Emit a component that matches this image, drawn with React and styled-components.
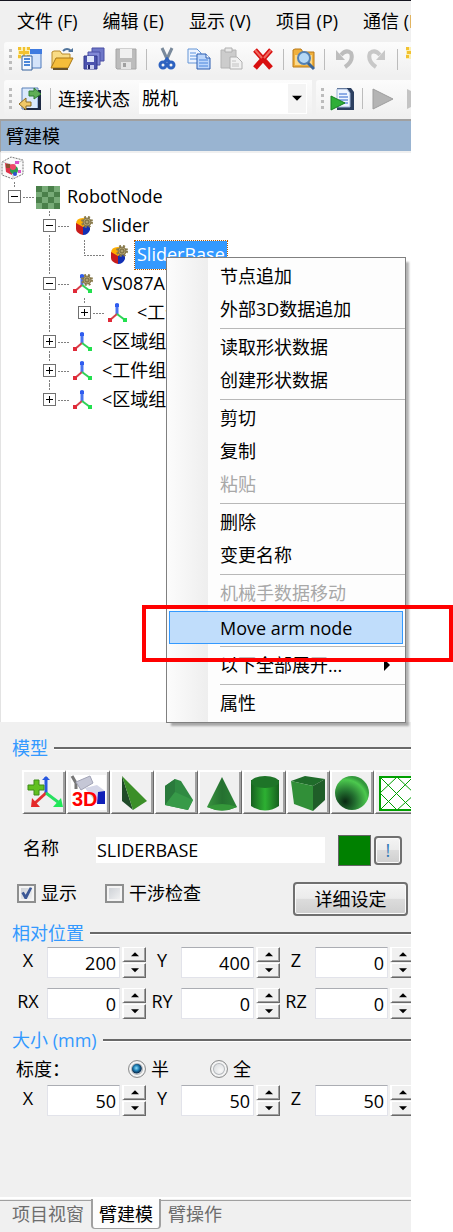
/**
 * Arm modelling pane: menu bar, tool strips, node tree with its context menu,
 * and the property form for the selected node.
 */

import { useState } from "react";
import styled, { createGlobalStyle, css } from "styled-components";

const GlobalStyle = createGlobalStyle`
  *, *::before, *::after {
    box-sizing: border-box;
  }

  body {
    margin: 0;
    background: #fff;
    color: #000;
    font: 18px/24px "Open Sans", "Noto Sans CJK SC", sans-serif;
  }

  button, input, select {
    margin: 0;
    padding: 0;
    border: 0;
    border-radius: 0;
    background: none;
    color: inherit;
    font: inherit;
  }
`;

const Page = styled.div`
  position: relative;
  min-height: 100vh;
  padding-right: 42px;
  display: flex;
`;

const AppWindow = styled.main`
  flex: 1;
  min-width: 0;
  display: flex;
  flex-direction: column;
  overflow: hidden;
  border-top: 1px solid #15151f;
  background: #f0f0f0;
`;

/* ---------- menu bar and tool strips ---------- */

const MenuBar = styled.nav`
  display: flex;
  gap: 25px;
  height: 41px;
  padding: 8px 0 0 17px;
`;

const MenuBarButton = styled.button`
  height: 24px;
  white-space: nowrap;
`;

const StripRow = styled.div`
  display: flex;
  gap: 4px;
  padding-left: 4px;
  height: ${(p) => p.$height}px;
`;

const Strip = styled.div`
  flex: ${(p) => (p.$width ? `0 0 ${p.$width}px` : "1 1 0")};
  min-width: 0;
  height: ${(p) => p.$height}px;
  display: flex;
  align-items: center;
  overflow: hidden;
  padding-left: 5px;
  border-radius: 3px 0 0 3px;
  background: linear-gradient(#fcfcfc, #f0f0f0);
`;

const Grip = styled.span`
  flex: none;
  width: 3px;
  height: 21px;
  margin-right: 2px;
  background: repeating-linear-gradient(#bcbcbc 0 3px, transparent 3px 6px);
`;

const ToolButton = styled.button`
  flex: 0 0 32px;
  height: 32px;
  display: flex;
  align-items: center;
  justify-content: center;
`;

const StripDivider = styled.span`
  flex: none;
  width: 1px;
  height: 21px;
  margin: 0 4px;
  background: #bcbcbc;
`;

const StatusLabel = styled.label`
  flex: none;
  margin: 0 9px 0 3px;
`;

const ComboBox = styled.div`
  position: relative;
  flex: 1;
  min-width: 0;
  height: 31px;
  margin-right: 5px;
  background: #fff;

  select {
    width: 100%;
    height: 31px;
    padding: 0 24px 2px 3px;
    appearance: none;
  }
`;

const ComboArrow = styled.span`
  position: absolute;
  top: 1px;
  right: 1px;
  width: 18px;
  height: 29px;
  display: flex;
  align-items: center;
  justify-content: center;
  background: #f4f4f4;
  pointer-events: none;
`;

const PaneTitle = styled.h1`
  margin: 0;
  height: 34px;
  padding: 3px 0 0 5px;
  border-top: 2px solid #a0a0a0;
  border-left: 1px solid #a0a0a0;
  border-bottom: 2px solid #f0f0f0;
  background: #99b4d1;
  font-size: 18px;
  line-height: 24px;
  font-weight: 400;
`;

/* ---------- tree ---------- */

const Tree = styled.ul`
  list-style: none;
  margin: 0;
  padding: 0;
  min-height: 569px;
  border-left: 1px solid #e3e3e3;
  background: #fff;
`;

const TreeRow = styled.li`
  display: flex;
  align-items: center;
  height: 29px;
  padding-left: ${(p) => (p.$level ? 7 : 0)}px;
`;

const verticalDots = css`
  content: "";
  position: absolute;
  left: 6px;
  top: 0;
  width: 1px;
  background: repeating-linear-gradient(#808080 0 2px, transparent 2px 3px);
`;

const Guide = styled.span`
  position: relative;
  flex: 0 0 35px;
  height: 29px;

  &::before {
    ${verticalDots}
    height: ${(p) => (p.$line ? 29 : 0)}px;
  }
`;

const Branch = styled.span`
  position: relative;
  flex: 0 0 28px;
  height: 29px;
  display: flex;
  align-items: center;

  &::before {
    ${verticalDots}
    height: ${(p) => (p.$last ? 15 : 29)}px;
  }

  &::after {
    content: "";
    position: absolute;
    left: 6px;
    right: 1px;
    top: 15px;
    height: 1px;
    background: repeating-linear-gradient(90deg, #808080 0 2px, transparent 2px 3px);
  }
`;

const Expander = styled.button`
  position: relative;
  z-index: 1;
  width: 13px;
  height: 13px;
  border: 1px solid #707070;
  outline: 2px solid #fff;
  background: #fff;

  &::before,
  &::after {
    content: "";
    position: absolute;
    background: #000;
  }

  &::before {
    left: 2px;
    top: 5px;
    width: 7px;
    height: 1px;
  }

  &::after {
    left: 5px;
    top: 2px;
    width: 1px;
    height: ${(p) => (p.$open ? 0 : 7)}px;
  }
`;

const NodeIcon = styled.span`
  flex: 0 0 24px;
  height: 24px;
`;

const NodeLabel = styled.span`
  margin-left: 5px;
  padding: 0 2px 2px;
  line-height: 26px;
  white-space: nowrap;

  ${(p) =>
    p.$selected &&
    css`
      outline: 1px dotted #b35a00;
      background: #3399ff;
      color: #fff;
    `}
`;

/* ---------- context menu ---------- */

const ContextMenu = styled.div`
  position: absolute;
  left: 166px;
  top: 257px;
  width: 240px;
  padding: 2px 0;
  border: 1px solid #808080;
  background: linear-gradient(90deg, #fcfcfc, #eeeeee 41px, #fdfdfd 41px);
  box-shadow: 4px 4px 2px -1px rgba(0, 0, 0, 0.3);
`;

const MenuItem = styled.button`
  display: flex;
  align-items: center;
  justify-content: space-between;
  width: 100%;
  height: 33px;
  padding: 0 11px 2px 53px;
  text-align: left;
  white-space: nowrap;

  &:disabled {
    color: #a8a8a8;
  }

  ${(p) =>
    p.$active &&
    css`
      width: calc(100% - 4px);
      margin: 1px 2px;
      padding: 0 11px 0 50px;
      border: 1px solid #3399ff;
      background: #c0ddfb;
    `}
`;

const MenuDivider = styled.hr`
  height: 1px;
  margin: 2px 0 2px 53px;
  border: 0;
  background: #b8b8b8;
`;

const Callout = styled.div`
  position: absolute;
  left: 142px;
  right: 0;
  top: 605px;
  height: 57px;
  border: 4px solid #ff0000;
  pointer-events: none;
`;

/* ---------- property form ---------- */

const Form = styled.form`
  flex: 1;
  padding-top: 14px;
`;

const SectionTitle = styled.h2`
  display: flex;
  align-items: center;
  gap: 6px;
  margin: 0;
  padding-left: 12px;
  color: #3399ff;
  font-size: 18px;
  line-height: 24px;
  font-weight: 400;

  &::after {
    content: "";
    flex: 1;
    height: 3px;
    border-top: 2px solid #696969;
    border-bottom: 1px solid #fff;
  }
`;

const ShapeBar = styled.div`
  display: flex;
  margin: 10px 0 0 22px;
  overflow: hidden;
`;

const ShapeButton = styled.button`
  flex: 0 0 44px;
  height: 44px;
  display: flex;
  align-items: center;
  justify-content: center;
  border: solid;
  border-width: 2px 1px 1px 2px;
  border-color: #fff #696969 #696969 #fff;
  box-shadow: inset -2px -1px #a0a0a0;
`;

const NameRow = styled.div`
  display: flex;
  align-items: center;
  margin-top: 20px;
  padding: 0 9px 0 23px;
  height: 32px;

  label {
    flex: 0 0 73px;
    line-height: 24px;
    padding-bottom: 4px;
  }
`;

const NameInput = styled.input`
  flex: 1;
  min-width: 0;
  height: 26px;
  padding: 0 1px;
  background: #fff;
`;

const Swatch = styled.button`
  width: 33px;
  height: 31px;
  margin-left: 13px;
  border: 1px solid #646464;
  background: #008000;
`;

const PushButton = styled.button`
  flex: none;
  width: ${(p) => p.$width}px;
  height: ${(p) => p.$height}px;
  border: 2px solid #707070;
  border-radius: 4px;
  background: linear-gradient(#f4f4f4, #ebebeb 48%, #dcdcdc 50%, #cfcfcf);
  box-shadow: inset 0 0 0 1px #fafafa;
`;

const AlertButton = styled(PushButton)`
  margin-left: 3px;
  color: #3378b8;
  line-height: 20px;
`;

const OptionsRow = styled.div`
  display: flex;
  align-items: flex-start;
  height: 34px;
  margin-top: 16px;
  padding: 0 3px 0 17px;
`;

const Option = styled.label`
  display: flex;
  align-items: center;
  gap: 5px;
  height: 22px;
  margin-right: 28px;
  white-space: nowrap;
`;

const Spacer = styled.span`
  flex: 1;
`;

const CheckBox = styled.input.attrs({ type: "checkbox" })`
  appearance: none;
  width: 19px;
  height: 19px;
  border: 2px solid #8e8f8f;
  box-shadow: inset 0 0 0 2px #f4f4f4;
  background: linear-gradient(135deg, #c8ccd2, #f6f6f6);

  &:checked::before {
    content: "";
    display: block;
    width: 15px;
    height: 15px;
    background: #3c5896;
    clip-path: polygon(16% 50%, 32% 42%, 44% 62%, 72% 12%, 88% 16%, 52% 90%, 38% 90%);
  }
`;

const Radio = styled.input.attrs({ type: "radio" })`
  appearance: none;
  width: 18px;
  height: 18px;
  border: 1px solid #8e8f8f;
  border-radius: 50%;
  box-shadow: inset 0 0 0 2px #f4f4f4, inset 0 0 0 3px #b4b8bc;
  background: radial-gradient(circle at 60% 60%, #f8f8f8, #c8ccd0);

  &:checked {
    background: radial-gradient(circle at 46% 44%, #8fe0ff, #1f7fb4 22%, #0b2f52 40%, #d8dde2 48%);
  }
`;

const AxisRow = styled.div`
  display: flex;
  height: 32px;
  margin-top: ${(p) => p.$gap}px;
  padding-left: 12px;
  overflow: hidden;
`;

const AxisField = styled.div`
  flex: 0 0 134px;
  display: flex;

  label {
    flex: 0 0 32px;
    margin-right: 3px;
    padding-top: 1px;
    text-align: center;
  }
`;

const AxisInput = styled.input`
  flex: 0 0 73px;
  width: 73px;
  height: 31px;
  padding: 0 3px 0 0;
  border: 1px solid #e2e3ea;
  border-top-color: #abadb3;
  background: #fff;
  text-align: right;
`;

const Spinner = styled.span`
  flex: 0 0 24px;
  margin-left: 2px;
`;

const SpinButton = styled.button`
  display: flex;
  align-items: center;
  justify-content: center;
  width: 24px;
  height: 15px;
  margin-bottom: 1px;
  border: solid;
  border-width: 1px 1px 1px 2px;
  border-color: #fff #696969 #696969 #fff;
  box-shadow: inset -1px -1px #a0a0a0;
`;

const PositionBlock = styled.section`
  margin: 5px 0 8px;
`;

const ScaleRow = styled.fieldset`
  display: flex;
  align-items: center;
  height: 24px;
  min-width: 0;
  margin: 5px 0 0;
  padding: 0 0 0 16px;
  border: 0;

  > span {
    flex: 0 0 112px;
  }

  ${Option} {
    flex: 0 0 82px;
    margin: 0;
  }
`;

/* ---------- bottom tabs ---------- */

const TabBar = styled.div`
  display: flex;
  height: 35px;
  padding-left: 3px;
  border-top: 2px solid #fff;
  background: linear-gradient(#a0a0a0, #a0a0a0) 0 1px / 100% 1px no-repeat #f0f0f0;
`;

const Tab = styled.button`
  height: 30px;
  padding: 0 7px;
  border: solid transparent;
  border-width: 0 2px 1px;
  color: #6d6d6d;

  ${(p) =>
    p.$active &&
    css`
      padding: 0 6px;
      margin: 0 -2px;
      border-color: #a0a0a0;
      border-radius: 0 0 4px 4px;
      background: #fdfdfd;
      color: #000;
    `}
`;

/* ---------- drawings ---------- */

const Star = () => (
  <path
    d="M0 0h3v3H0zM5 0h2v4h4v3H7v4H5V7H1V4h4zM9 0h3v3H9zM0 8h3v3H0zM9 8h3v3H9z"
    fill="#f2c230"
  />
);

const TOOL_ICONS = {
  new: (
    <>
      <path d="M6 3h17v18H6z" fill="#d4e3fa" stroke="#4d78bc" />
      <path d="M6 2h18v5H6z" fill="#3f7be0" />
      <path d="M0 0h12v12H0z" fill="#fbefb4" />
      <Star />
      <path d="M4 9h10v14H4z" fill="#f3f7fd" stroke="#34619c" />
      <path d="M6 12h6M6 15h6M6 18h6" stroke="#4a86d8" strokeWidth="2" />
    </>
  ),
  open: (
    <>
      <path d="M2 21V5l2-1h6l2 3h8v4" fill="#f9dc85" stroke="#b98a2c" />
      <path d="M1 21l5-10h17l-5 10z" fill="#f5bd3a" stroke="#a97816" />
      <path d="M3 22h15" stroke="#66512a" strokeWidth="2" />
      <path d="M13 4q4-4 8 0" fill="none" stroke="#51749c" strokeWidth="2" />
      <path d="M18 5h5V1z" fill="#51749c" />
    </>
  ),
  saveAll: (
    <>
      <path d="M10 1h12v13H10z" fill="#6f78c8" stroke="#4a4fa4" />
      <path d="M6 5h12v13H6z" fill="#8189d6" stroke="#4a4fa4" />
      <path d="M2 9h13v13H2z" fill="#4b52ae" stroke="#33388c" />
      <path d="M5 9h7v6H5z" fill="#dfe6fa" />
      <path d="M5 18h7v4H5z" fill="#c9cdef" />
      <path d="M6 18h2v4H6z" fill="#25286e" />
    </>
  ),
  save: (
    <>
      <path d="M2 2h20v20H3l-1-1z" fill="#bcbcbc" stroke="#a6a6a6" />
      <path d="M6 2h12v9H6z" fill="#f0f0f0" />
      <path d="M7 15h10v7H7z" fill="#e4e4e4" />
      <path d="M9 16h3v4H9z" fill="#a0a0a0" />
    </>
  ),
  cut: (
    <>
      <path d="M7 1l6 13M17 1l-6 13" stroke="#7a8a9c" strokeWidth="3" />
      <circle cx="8" cy="18" r="3" fill="none" stroke="#2d62c0" strokeWidth="3" />
      <circle cx="16" cy="18" r="3" fill="none" stroke="#2d62c0" strokeWidth="3" />
      <path d="M9 16l3-4 3 4" fill="none" stroke="#2d62c0" strokeWidth="3" />
    </>
  ),
  copy: (
    <>
      <path d="M1 2h9l4 4v10H1z" fill="#edf4ff" stroke="#6495d6" />
      <path d="M3 6h6M3 9h8M3 12h8" stroke="#5b93e0" />
      <path d="M10 7h9l4 4v11H10z" fill="#bcd6fb" stroke="#2a5cb0" />
      <path d="M19 7v4h4" fill="#fff" stroke="#2a5cb0" />
      <path d="M12 13h9M12 16h9M12 19h9" stroke="#4a86dc" />
    </>
  ),
  paste: (
    <>
      <path d="M2 3h15v18H2z" fill="#cccccc" stroke="#b4b4b4" />
      <path d="M6 1h7v4H6z" fill="#e9e9e9" stroke="#b0b0b0" />
      <path d="M11 10h7l5 5v7H11z" fill="#f1f1f1" stroke="#b0b0b0" />
      <path d="M13 14h4M13 17h7M13 19h7" stroke="#c2c2c2" />
    </>
  ),
  remove: (
    <>
      <path d="M4 3l16 18M20 3L4 21" stroke="#d80f0f" strokeWidth="5" />
      <path d="M4 3l7 8M20 3l-7 8" stroke="#f06a60" strokeWidth="2" />
    </>
  ),
  find: (
    <>
      <path d="M1 20V3l2-1h6l2 3h11v15z" fill="#f0b03c" stroke="#b87818" />
      <path d="M3 8h17v10H3z" fill="#f9d98e" />
      <circle cx="12" cy="11" r="6" fill="#b5d8f6" stroke="#5481b4" strokeWidth="2" />
      <path d="M16 16l6 6" stroke="#3d6698" strokeWidth="3" />
    </>
  ),
  undo: (
    <>
      <path d="M8 8q5-6 10-2 3 8-6 14" fill="none" stroke="#bdbdbd" strokeWidth="4" />
      <path d="M3 3v10h9z" fill="#bdbdbd" />
    </>
  ),
  redo: (
    <>
      <path d="M15 8q-5-6-10-2-3 8 6 14" fill="none" stroke="#c8c8c8" strokeWidth="4" />
      <path d="M20 3v10h-9z" fill="#c8c8c8" />
    </>
  ),
  connect: (
    <>
      <path d="M4 1h16v21H4z" fill="#dbe9fc" stroke="#5b80b8" />
      <path d="M20 3h3v20H6v-2h14z" fill="#1f2a44" />
      <path d="M11 4h5V1l7 6-7 5V9h-5z" fill="#5fae56" stroke="#2f7d33" />
      <path d="M13 15H8v-4l-7 6 7 6v-4h5z" fill="#f0c866" stroke="#8b6a22" />
    </>
  ),
  run: (
    <>
      <path d="M7 1h14l3 4v18H7z" fill="#2c3f60" />
      <path d="M7 2h10l3 4v14H7z" fill="#eff5ff" stroke="#9db4d8" />
      <path d="M9 7h8M9 10h9M9 13h9M9 16h9" stroke="#2b62cc" />
      <path d="M1 9l14 7-14 7z" fill="#2fae38" stroke="#178024" />
    </>
  ),
  play: <path d="M2 2l20 10L2 22z" fill="#b4b4b4" stroke="#9e9e9e" />,
  step: <path d="M4 2l20 10L4 22z" fill="#c4c4c4" />,
  newItem: (
    <>
      <path d="M0 0h12v12H0z" fill="#fbefb4" />
      <Star />
      <path d="M7 12v10" stroke="#3f5c84" strokeWidth="3" />
    </>
  ),
};

function ToolIcon({ name }) {
  return (
    <svg width="24" height="24" viewBox="0 0 24 24" aria-hidden="true">
      {TOOL_ICONS[name]}
    </svg>
  );
}

const Gear = () => (
  <>
    <circle cx="16" cy="8" r="5" fill="none" stroke="#8b7d4e" strokeWidth="2" strokeDasharray="2 2" />
    <circle cx="16" cy="8" r="4" fill="#b0a274" stroke="#82744a" />
    <circle cx="16" cy="8" r="2" fill="none" stroke="#75683c" />
  </>
);

const Axes = () => (
  <>
    <path d="M11 2v12" stroke="#4a74ee" strokeWidth="3" />
    <path d="M9 3h4v3H9z" fill="#2f5cf0" />
    <path d="M11 13l-7 6" stroke="#d8404a" strokeWidth="2" />
    <path d="M2 17h4v4H2z" fill="#e02a38" />
    <path d="M11 13l8 6" stroke="#30d058" strokeWidth="2" />
    <path d="M17 17h4v4h-4z" fill="#22e04e" />
  </>
);

const NODE_ICONS = {
  root: (
    <>
      <path d="M1 6l9-5 12 3v14l-10 5-11-4z" fill="#fafafa" stroke="#777" strokeDasharray="2 1" />
      <path d="M1 6l11 3 10-5M12 9v14" fill="none" stroke="#c4c4c4" />
      <path d="M4 7l7 2v10l-6-3z" fill="#e03048" />
      <path d="M5 8h4v4H5z" fill="#8a5030" />
      <circle cx="13" cy="14" r="4" fill="#28a050" />
      <circle cx="14" cy="18" r="2" fill="#3050d0" />
      <path d="M14 5h4v3h-4zM17 14h3v3h-3z" fill="#d850c8" />
      <circle cx="12" cy="11" r="3" fill="#f04868" />
    </>
  ),
  checker: (
    <>
      <path d="M0 1h24v23H0z" fill="#77ab77" />
      <path
        d="M0 1h6v6H0zM12 1h6v6h-6zM6 7h6v5H6zM18 7h6v5h-6zM0 12h6v6H0zM12 12h6v6h-6zM6 18h6v6H6zM18 18h6v6h-6z"
        fill="#4a804a"
      />
    </>
  ),
  part: (
    <>
      <path d="M5 10q0-6 7-6 6 0 8 6l-8 4z" fill="#ffae00" />
      <path d="M5 9l7 4v8q-7-2-7-6z" fill="#c81c1c" />
      <path d="M12 13l7-4v7q-2 5-7 5z" fill="#1230b4" />
      <Gear />
    </>
  ),
  robot: (
    <>
      <Axes />
      <Gear />
    </>
  ),
  axes: <Axes />,
};

const ImportText = styled.text`
  font: 700 20px "Liberation Sans", sans-serif;
  fill: #f00;
`;

const SHAPE_ICONS = {
  addNode: (
    <>
      <path d="M20 3v17" stroke="#2858e0" strokeWidth="3" />
      <path d="M16 6l4-4 4 4z" fill="#2858e0" />
      <path d="M20 19L9 29" stroke="#e43030" strokeWidth="3" />
      <path d="M5 33l1-9 8 9z" fill="#e42828" />
      <path d="M20 19l12 9" stroke="#28e060" strokeWidth="3" />
      <path d="M37 33H27l8-9z" fill="#20e858" />
      <path d="M8 6h5v5h5v5h-5v5H8v-5H2v-5h6z" fill="#62c020" stroke="#3f8c18" />
    </>
  ),
  import3d: (
    <>
      <path d="M1 1h35v35H1z" fill="#fff" />
      <path d="M2 2l4 7v6" fill="none" stroke="#777" strokeWidth="3" />
      <path d="M6 8l14-6 3 7-12 7z" fill="#c5c7d6" stroke="#a2a4b6" />
      <path d="M15 14l12-3 8 6v12h-9z" fill="#d5d7e8" />
      <path d="M28 18l7-1v13h-8z" fill="#1020b8" />
      <ImportText x="2" y="32">
        3D
      </ImportText>
    </>
  ),
  tetra: (
    <>
      <path d="M8 2v25l11 9z" fill="#1f4a28" />
      <path d="M8 2l25 25-14 9z" fill="#3b8f28" />
    </>
  ),
  prism: (
    <>
      <path d="M7 12l10-7 6 2 12 19-5 10-23-5z" fill="#2f8a42" />
      <path d="M7 12l10-7v13L7 31z" fill="#2a7a3c" />
      <path d="M17 18l18 8-5 10-23-5z" fill="#379a48" />
    </>
  ),
  cone: (
    <>
      <path d="M20 3L5 33q15 7 30 0z" fill="url(#coneFill)" />
      <path d="M5 33q15 7 30 0-15-6-30 0z" fill="#35983a" />
    </>
  ),
  cylinder: (
    <>
      <path d="M5 6v26q14 9 28 0V6z" fill="url(#tubeFill)" />
      <ellipse cx="19" cy="8" rx="14" ry="6" fill="#1e7428" />
    </>
  ),
  box: (
    <>
      <path d="M1 7l14-5 20 3-12 7z" fill="#1f6c2a" />
      <path d="M1 7l22 5v25L4 30z" fill="#318f38" />
      <path d="M23 12l12-7v21L23 37z" fill="#1f5e28" />
    </>
  ),
  sphere: <circle cx="18" cy="19" r="17" fill="url(#ballFill)" />,
  mesh: (
    <>
      <path d="M2 3h35v33H2z" fill="#fff" stroke="#00a000" strokeWidth="2" />
      <path
        d="M2 3l33 33M35 3L2 36M19 3L2 19l17 17M19 3l18 17-18 16"
        fill="none"
        stroke="#00a000"
      />
    </>
  ),
};

function ShapeIcon({ name }) {
  return (
    <svg width="38" height="38" viewBox="0 0 38 38" aria-hidden="true">
      <defs>
        <linearGradient id="coneFill">
          <stop offset="0" stopColor="#3a9440" />
          <stop offset="0.5" stopColor="#257030" />
          <stop offset="1" stopColor="#2c8436" />
        </linearGradient>
        <linearGradient id="tubeFill">
          <stop offset="0" stopColor="#176020" />
          <stop offset="0.5" stopColor="#2db032" />
          <stop offset="1" stopColor="#17601f" />
        </linearGradient>
        <radialGradient id="ballFill" cx="0.3" cy="0.75" r="0.75">
          <stop offset="0" stopColor="#092812" />
          <stop offset="0.4" stopColor="#237030" />
          <stop offset="0.85" stopColor="#4cc84e" />
          <stop offset="1" stopColor="#33983c" />
        </radialGradient>
      </defs>
      {SHAPE_ICONS[name]}
    </svg>
  );
}

function Arrow({ direction, size = 8 }) {
  const paths = { up: "M0 4l3-3 3 3z", down: "M0 1h6L3 4z", right: "M1 0v6l3-3z" };

  return (
    <svg width={size} height={size} viewBox="0 0 6 6" aria-hidden="true">
      <path d={paths[direction]} />
    </svg>
  );
}

/* ---------- data ---------- */

const MENUS = ["文件 (F)", "编辑 (E)", "显示 (V)", "项目 (P)", "通信 (N)"];

const MAIN_TOOLS = [
  ["new", "新建"],
  ["open", "打开"],
  ["saveAll", "全部保存"],
  ["save", "保存"],
  null,
  ["cut", "剪切"],
  ["copy", "复制"],
  ["paste", "粘贴"],
  ["remove", "删除"],
  null,
  ["find", "查找"],
  null,
  ["undo", "撤销"],
  ["redo", "重做"],
  null,
  ["newItem", "新建项"],
];

// guides: one flag for each ancestor column, true where its line goes on
const NODES = [
  { label: "Root", icon: "root", level: 0 },
  { label: "RobotNode", icon: "checker", level: 1, guides: [], last: true, open: true },
  { label: "Slider", icon: "part", level: 2, guides: [false], open: true },
  { label: "SliderBase", icon: "part", level: 3, guides: [false, true], last: true, selected: true },
  { label: "VS087A", icon: "robot", level: 2, guides: [false], open: true },
  { label: "<工件组>", icon: "axes", level: 3, guides: [false, true], last: true, open: false },
  { label: "<区域组>", icon: "axes", level: 2, guides: [false], open: false },
  { label: "<工件组>", icon: "axes", level: 2, guides: [false], open: false },
  { label: "<区域组>", icon: "axes", level: 2, guides: [false], last: true, open: false },
];

const MENU_GROUPS = [
  [{ text: "节点追加" }, { text: "外部3D数据追加" }],
  [{ text: "读取形状数据" }, { text: "创建形状数据" }],
  [{ text: "剪切" }, { text: "复制" }, { text: "粘贴", disabled: true }],
  [{ text: "删除" }, { text: "变更名称" }],
  [{ text: "机械手数据移动", disabled: true }, { text: "Move arm node", active: true }],
  [{ text: "以下全部展开...", submenu: true }],
  [{ text: "属性" }],
];

const TABS = ["项目视窗", "臂建模", "臂操作"];

/* ---------- parts ---------- */

function Tool({ name, title }) {
  return (
    <ToolButton type="button" aria-label={title}>
      <ToolIcon name={name} />
    </ToolButton>
  );
}

function TreeNode({ node }) {
  return (
    <TreeRow $level={node.level}>
      {node.guides?.map((line, index) => <Guide key={index} $line={line} />)}
      {node.level > 0 ? (
        <Branch $last={node.last}>
          {node.open !== undefined ? (
            <Expander type="button" $open={node.open} aria-label={`展开 ${node.label}`} />
          ) : null}
        </Branch>
      ) : null}
      <NodeIcon>
        <svg width="24" height="24" viewBox="0 0 24 24" aria-hidden="true">
          {NODE_ICONS[node.icon]}
        </svg>
      </NodeIcon>
      <NodeLabel $selected={node.selected}>{node.label}</NodeLabel>
    </TreeRow>
  );
}

function NodeMenu() {
  return (
    <ContextMenu role="menu">
      {MENU_GROUPS.map((group, index) => (
        <div key={group[0].text} role="group">
          {index > 0 ? <MenuDivider /> : null}
          {group.map((item) => (
            <MenuItem
              key={item.text}
              type="button"
              role="menuitem"
              disabled={item.disabled}
              $active={item.active}
            >
              {item.text}
              {item.submenu ? <Arrow direction="right" size={12} /> : null}
            </MenuItem>
          ))}
        </div>
      ))}
    </ContextMenu>
  );
}

function AxisFields({ id, gap, fields }) {
  return (
    <AxisRow $gap={gap}>
      {fields.map(([name, value]) => (
        <AxisField key={name}>
          <label htmlFor={`${id}-${name}`}>{name}</label>
          <AxisInput id={`${id}-${name}`} defaultValue={value} />
          <Spinner>
            <SpinButton type="button" aria-label={`${name} +`}>
              <Arrow direction="up" />
            </SpinButton>
            <SpinButton type="button" aria-label={`${name} -`}>
              <Arrow direction="down" />
            </SpinButton>
          </Spinner>
        </AxisField>
      ))}
    </AxisRow>
  );
}

const App = () => {
  const [scale, setScale] = useState("half");
  const [tab, setTab] = useState("臂建模");

  return (
    <>
      <GlobalStyle />
      <Page>
        <AppWindow>
          <MenuBar>
            {MENUS.map((menu) => (
              <MenuBarButton key={menu} type="button">
                {menu}
              </MenuBarButton>
            ))}
          </MenuBar>

          <StripRow $height={38}>
            <Strip $height={34}>
              <Grip />
              {MAIN_TOOLS.map((tool, index) =>
                tool ? (
                  <Tool key={tool[0]} name={tool[0]} title={tool[1]} />
                ) : (
                  <StripDivider key={index} />
                )
              )}
            </Strip>
          </StripRow>

          <StripRow $height={39}>
            <Strip $height={37}>
              <Grip />
              <Tool name="connect" title="连接" />
              <StripDivider />
              <StatusLabel htmlFor="status">连接状态</StatusLabel>
              <ComboBox>
                <select id="status" defaultValue="脱机">
                  <option>脱机</option>
                  <option>在线</option>
                </select>
                <ComboArrow>
                  <Arrow direction="down" size={10} />
                </ComboArrow>
              </ComboBox>
            </Strip>
            <Strip $height={37} $width={95}>
              <Grip />
              <Tool name="run" title="运行" />
              <StripDivider />
              <Tool name="play" title="播放" />
              <Tool name="step" title="单步" />
            </Strip>
          </StripRow>

          <PaneTitle>臂建模</PaneTitle>

          <Tree>
            {NODES.map((node, index) => (
              <TreeNode key={index} node={node} />
            ))}
          </Tree>

          <Form>
            <SectionTitle>模型</SectionTitle>
            <ShapeBar>
              {Object.keys(SHAPE_ICONS).map((name) => (
                <ShapeButton key={name} type="button" aria-label={name}>
                  <ShapeIcon name={name} />
                </ShapeButton>
              ))}
            </ShapeBar>

            <NameRow>
              <label htmlFor="node-name">名称</label>
              <NameInput id="node-name" defaultValue="SLIDERBASE" />
              <Swatch type="button" aria-label="颜色" />
              <AlertButton type="button" $width={28} $height={29}>
                !
              </AlertButton>
            </NameRow>

            <OptionsRow>
              <Option>
                <CheckBox defaultChecked />
                显示
              </Option>
              <Option>
                <CheckBox />
                干涉检查
              </Option>
              <Spacer />
              <PushButton type="button" $width={115} $height={34}>
                详细设定
              </PushButton>
            </OptionsRow>

            <PositionBlock>
              <SectionTitle>相对位置</SectionTitle>
              <AxisFields id="pos" gap={2} fields={[["X", 200], ["Y", 400], ["Z", 0]]} />
              <AxisFields id="rot" gap={9} fields={[["RX", 0], ["RY", 0], ["RZ", 0]]} />
            </PositionBlock>

            <SectionTitle>大小 (mm)</SectionTitle>
            <ScaleRow>
              <span>标度：</span>
              <Option>
                <Radio
                  name="scale"
                  checked={scale === "half"}
                  onChange={() => setScale("half")}
                />
                半
              </Option>
              <Option>
                <Radio
                  name="scale"
                  checked={scale === "full"}
                  onChange={() => setScale("full")}
                />
                全
              </Option>
            </ScaleRow>
            <AxisFields id="size" gap={4} fields={[["X", 50], ["Y", 50], ["Z", 50]]} />
          </Form>

          <TabBar>
            {TABS.map((name) => (
              <Tab key={name} type="button" $active={tab === name} onClick={() => setTab(name)}>
                {name}
              </Tab>
            ))}
          </TabBar>
        </AppWindow>

        <NodeMenu />
        <Callout />
      </Page>
    </>
  );
};

export default App;
